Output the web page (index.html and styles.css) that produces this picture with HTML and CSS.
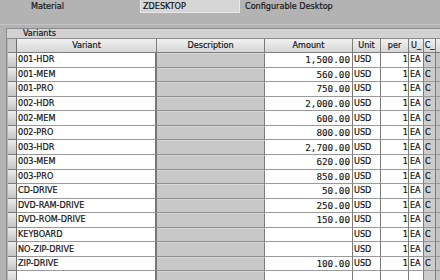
FILE: index.html
```html
<!DOCTYPE html>
<html>
<head>
<meta charset="utf-8">
<link rel="stylesheet" href="styles.css">
</head>
<body>
<div class="top">
  <span class="label">Material</span>
  <span class="field">ZDESKTOP</span>
  <span class="desc-text">Configurable Desktop</span>
</div>
<div class="panel">
  <div class="title">Variants</div>
  <div class="grid">
    <div class="row head">
      <div class="c sel"></div>
      <div class="c">Variant</div>
      <div class="c">Description</div>
      <div class="c">Amount</div>
      <div class="c">Unit</div>
      <div class="c">per</div>
      <div class="c">U_</div>
      <div class="c">C_</div>
      <div class="c"></div>
    </div>
    <div class="row"><div class="c sel"></div><div class="c var">001-HDR</div><div class="c dsc"></div><div class="c amt">1,500.00</div><div class="c unit">USD</div><div class="c per">1</div><div class="c u">EA</div><div class="c cc">C</div><div class="c ex"></div></div>
    <div class="row"><div class="c sel"></div><div class="c var">001-MEM</div><div class="c dsc"></div><div class="c amt">560.00</div><div class="c unit">USD</div><div class="c per">1</div><div class="c u">EA</div><div class="c cc">C</div><div class="c ex"></div></div>
    <div class="row"><div class="c sel"></div><div class="c var">001-PRO</div><div class="c dsc"></div><div class="c amt">750.00</div><div class="c unit">USD</div><div class="c per">1</div><div class="c u">EA</div><div class="c cc">C</div><div class="c ex"></div></div>
    <div class="row"><div class="c sel"></div><div class="c var">002-HDR</div><div class="c dsc"></div><div class="c amt">2,000.00</div><div class="c unit">USD</div><div class="c per">1</div><div class="c u">EA</div><div class="c cc">C</div><div class="c ex"></div></div>
    <div class="row"><div class="c sel"></div><div class="c var">002-MEM</div><div class="c dsc"></div><div class="c amt">600.00</div><div class="c unit">USD</div><div class="c per">1</div><div class="c u">EA</div><div class="c cc">C</div><div class="c ex"></div></div>
    <div class="row"><div class="c sel"></div><div class="c var">002-PRO</div><div class="c dsc"></div><div class="c amt">800.00</div><div class="c unit">USD</div><div class="c per">1</div><div class="c u">EA</div><div class="c cc">C</div><div class="c ex"></div></div>
    <div class="row"><div class="c sel"></div><div class="c var">003-HDR</div><div class="c dsc"></div><div class="c amt">2,700.00</div><div class="c unit">USD</div><div class="c per">1</div><div class="c u">EA</div><div class="c cc">C</div><div class="c ex"></div></div>
    <div class="row"><div class="c sel"></div><div class="c var">003-MEM</div><div class="c dsc"></div><div class="c amt">620.00</div><div class="c unit">USD</div><div class="c per">1</div><div class="c u">EA</div><div class="c cc">C</div><div class="c ex"></div></div>
    <div class="row"><div class="c sel"></div><div class="c var">003-PRO</div><div class="c dsc"></div><div class="c amt">850.00</div><div class="c unit">USD</div><div class="c per">1</div><div class="c u">EA</div><div class="c cc">C</div><div class="c ex"></div></div>
    <div class="row"><div class="c sel"></div><div class="c var">CD-DRIVE</div><div class="c dsc"></div><div class="c amt">50.00</div><div class="c unit">USD</div><div class="c per">1</div><div class="c u">EA</div><div class="c cc">C</div><div class="c ex"></div></div>
    <div class="row"><div class="c sel"></div><div class="c var">DVD-RAM-DRIVE</div><div class="c dsc"></div><div class="c amt">250.00</div><div class="c unit">USD</div><div class="c per">1</div><div class="c u">EA</div><div class="c cc">C</div><div class="c ex"></div></div>
    <div class="row"><div class="c sel"></div><div class="c var">DVD-ROM-DRIVE</div><div class="c dsc"></div><div class="c amt">150.00</div><div class="c unit">USD</div><div class="c per">1</div><div class="c u">EA</div><div class="c cc">C</div><div class="c ex"></div></div>
    <div class="row"><div class="c sel"></div><div class="c var">KEYBOARD</div><div class="c dsc"></div><div class="c amt"></div><div class="c unit">USD</div><div class="c per">1</div><div class="c u">EA</div><div class="c cc">C</div><div class="c ex"></div></div>
    <div class="row"><div class="c sel"></div><div class="c var">NO-ZIP-DRIVE</div><div class="c dsc"></div><div class="c amt"></div><div class="c unit">USD</div><div class="c per">1</div><div class="c u">EA</div><div class="c cc">C</div><div class="c ex"></div></div>
    <div class="row"><div class="c sel"></div><div class="c var">ZIP-DRIVE</div><div class="c dsc"></div><div class="c amt">100.00</div><div class="c unit">USD</div><div class="c per">1</div><div class="c u">EA</div><div class="c cc">C</div><div class="c ex"></div></div>
    <div class="row"><div class="c sel"></div><div class="c var"></div><div class="c dsc"></div><div class="c amt"></div><div class="c unit"></div><div class="c per"></div><div class="c u"></div><div class="c cc"></div><div class="c ex"></div></div>
  </div>
</div>
</body>
</html>
```
FILE: styles.css
```css
html, body {
  margin: 0;
  padding: 0;
  background: #b3b3b3;
  width: 440px;
  height: 280px;
  overflow: hidden;
  font-family: "DejaVu Sans Condensed", "DejaVu Sans", sans-serif;
  font-stretch: condensed;
  font-size: 9px;
  color: #111;
  -webkit-text-stroke: 0.2px #111;
}
.top {
  height: 25px;
  display: flex;
  align-items: flex-start;
  border-bottom: 1px solid #c4c4c4;
  box-sizing: border-box;
}
.label {
  margin-left: 31px;
  margin-top: 1px;
  width: 109px;
  color: #222;
}
.field {
  width: 100px;
  height: 13px;
  box-sizing: border-box;
  background: #d6d6d6;
  border: 1px solid #e8e8e8;
  border-top: none;
  padding: 0 0 0 2px;
  line-height: 12px;
}
.desc-text {
  margin-left: 5px;
  margin-top: 1px;
  color: #222;
}
.panel {
  margin-top: 3px;
  margin-left: 6px;
  border-top: 1px solid #8c8c8c;
  border-left: 1px solid #8c8c8c;
}
.title {
  height: 9px;
  line-height: 9px;
  background: #d2d2d2;
  padding-left: 16px;
  color: #222;
  border-bottom: 1px solid #8c8c8c;
}
.grid {
  display: flex;
  flex-direction: column;
  padding-left: 1px;
}
.row {
  display: grid;
  grid-template-columns: 9px 140px 108px 88px 28px 28px 15px 12px 20px;
  height: 14.57px;
}
.row.head {
  height: 14px;
}
.c {
  box-sizing: border-box;
  border-right: 1px solid #7c7c7c;
  border-bottom: 1px solid #9a9a9a;
  background: #fff;
  overflow: hidden;
  white-space: nowrap;
  display: flex;
  align-items: center;
  line-height: 13px;
}
.head .c {
  background: linear-gradient(#f2f2f2, #d6d6d6);
  justify-content: center;
  color: #222;
  border-bottom: 1px solid #7c7c7c;
}
.head .c.sel {
  background: #c9c9c9;
}
.c.sel {
  background: linear-gradient(#ececec, #c4c4c4);
  border-right: 1px solid #6e6e6e;
  border-bottom: 1px solid #7c7c7c;
}
.var {
  padding-left: 1px;
  border-right: 2px solid #777;
}
.dsc {
  background: #c8c8c8;
  border-bottom: 1px solid #8f8f8f;
  border-top: 1px solid #d6d6d6;
}
.amt {
  justify-content: flex-end;
  padding-right: 2px;
  font-family: "DejaVu Sans Mono", monospace;
  font-stretch: normal;
  font-size: 9.3px;
  -webkit-text-stroke: 0.1px #111;
}
.unit {
  padding-left: 1px;
}
.per {
  justify-content: flex-end;
}
.u {
  padding-left: 1px;
}
.cc {
  background: #cdcdcd;
  padding-left: 1px;
}
.ex {
  background: #c4c4c4;
}
```
